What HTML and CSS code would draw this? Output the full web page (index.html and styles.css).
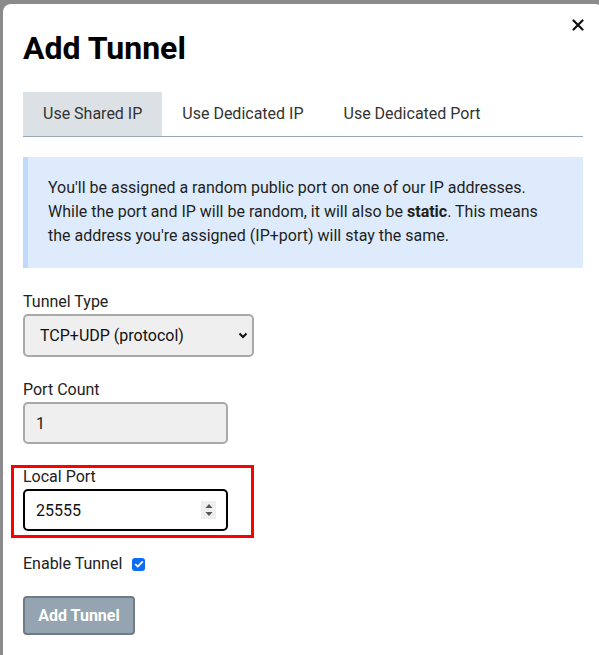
FILE: index.html
```html
<!DOCTYPE html>
<html>
<head>
<meta charset="utf-8">
<link rel="stylesheet" href="styles.css">
</head>
<body>
<div class="modal">
  <button class="close" aria-label="Close">
    <svg width="12" height="12" viewBox="0 0 12 12"><path d="M1.5 1.5 L10.5 10.5 M10.5 1.5 L1.5 10.5" stroke="#111" stroke-width="2.2" stroke-linecap="round"/></svg>
  </button>
  <h1 class="title">Add Tunnel</h1>
  <div class="tabs">
    <div class="tab active">Use Shared IP</div>
    <div class="tab">Use Dedicated IP</div>
    <div class="tab">Use Dedicated Port</div>
  </div>
  <div class="info">
    You'll be assigned a random public port on one of our IP addresses.<br>
    While the port and IP will be random, it will also be <b>static</b>. This means<br>
    the address you're assigned (IP+port) will stay the same.
  </div>
  <div class="field first">
    <label class="label">Tunnel Type</label>
    <div class="select">
      <span>TCP+UDP (protocol)</span>
      <svg width="10" height="7" viewBox="0 0 10 7"><path d="M1.5 1.5 L5 5 L8.5 1.5" fill="none" stroke="#111" stroke-width="2"/></svg>
    </div>
  </div>
  <div class="field">
    <label class="label">Port Count</label>
    <div class="input disabled">1</div>
  </div>
  <div class="field highlight">
    <label class="label">Local Port</label>
    <div class="input focused">
      <span>25555</span>
      <span class="spinner">
        <svg width="8" height="14" viewBox="0 0 8 14"><path d="M4 1 L7.5 5 L0.5 5 Z M4 13 L7.5 9 L0.5 9 Z" fill="#555"/></svg>
      </span>
    </div>
    <div class="redbox"></div>
  </div>
  <div class="check-row">
    <span>Enable Tunnel</span>
    <span class="checkbox">
      <svg width="10" height="8" viewBox="0 0 10 8"><path d="M1.2 4.2 L3.8 6.6 L8.8 1.3" fill="none" stroke="#fff" stroke-width="1.8"/></svg>
    </span>
  </div>
  <button class="submit">Add Tunnel</button>
</div>
</body>
</html>
```

FILE: styles.css
```css
html, body {
  margin: 0;
  padding: 0;
  height: 655px;
  overflow: hidden;
  background: #8b8b8b;
  font-family: Roboto, "Liberation Sans", sans-serif;
}

.modal {
  position: relative;
  margin: 4px 0 0 3px;
  width: 600px;
  height: 680px;
  box-sizing: border-box;
  background: #fff;
  border-radius: 8px;
  padding: 24px 19px 0 20px;
  color: #212529;
}

.close {
  position: absolute;
  top: 15px;
  right: 19px;
  border: 0;
  background: none;
  padding: 0;
  width: 12px;
  height: 12px;
  display: flex;
}

.title {
  margin: 0;
  font-size: 32px;
  font-weight: 700;
  line-height: 40px;
  color: #000;
}

.tabs {
  display: flex;
  margin-top: 24px;
  width: 560px;
  border-bottom: 1px solid #9aa9b6;
}

.tab {
  padding: 0 20px;
  height: 44px;
  line-height: 44px;
  font-size: 16px;
  color: #333;
}

.tab.active {
  background: #dce1e6;
}

.info {
  margin-top: 20px;
  width: 560px;
  box-sizing: border-box;
  background: #deebfc;
  border-left: 5px solid #c1d9fb;
  padding: 19px 20px 20px 20px;
  font-size: 16px;
  line-height: 24px;
  color: #1d1f22;
}

.info b {
  font-weight: 700;
}

.field {
  position: relative;
  display: flex;
  flex-direction: column;
  align-items: flex-start;
  margin-top: 21px;
}

.field.first {
  margin-top: 22px;
}

.label {
  font-size: 16px;
  line-height: 20px;
  color: #222;
  padding-top: 2px;
  margin-bottom: 2px;
}

.select {
  width: 231px;
  height: 43px;
  box-sizing: border-box;
  border: 2px solid #a9a9a9;
  border-radius: 5px;
  background: #efefef;
  display: flex;
  align-items: center;
  justify-content: space-between;
  padding: 0 2px 0 15px;
  font-size: 16px;
  color: #111;
}

.select svg {
  margin-right: 2px;
}

.input {
  width: 205px;
  height: 42px;
  box-sizing: border-box;
  border: 2px solid #a9a9a9;
  border-radius: 5px;
  display: flex;
  align-items: center;
  justify-content: space-between;
  padding: 0 10px 0 11px;
  font-size: 16px;
  color: #222;
}

.input.disabled {
  background: #efefef;
}

.input.focused {
  border-color: #000;
  background: #fff;
  color: #111;
}

.spinner {
  width: 15px;
  height: 18px;
  background: #eeeeee;
  display: flex;
  align-items: center;
  justify-content: center;
}

.redbox {
  position: absolute;
  left: -12px;
  top: 0;
  width: 243px;
  height: 73px;
  box-sizing: border-box;
  border: 3px solid #ff0000;
}

.check-row {
  display: flex;
  align-items: center;
  gap: 10px;
  margin-top: 21px;
  font-size: 16px;
  line-height: 24px;
  color: #222;
}

.checkbox {
  width: 13px;
  height: 13px;
  border-radius: 3px;
  background: #0b6cf5;
  display: flex;
  align-items: center;
  justify-content: center;
}

.submit {
  display: block;
  margin-top: 20px;
  width: 112px;
  height: 39px;
  box-sizing: border-box;
  background: #95a4b1;
  border: 2px solid #6e7c89;
  border-radius: 4px;
  color: #fff;
  font-family: Roboto, "Liberation Sans", sans-serif;
  font-size: 16px;
  font-weight: 700;
  padding: 0;
}
```
